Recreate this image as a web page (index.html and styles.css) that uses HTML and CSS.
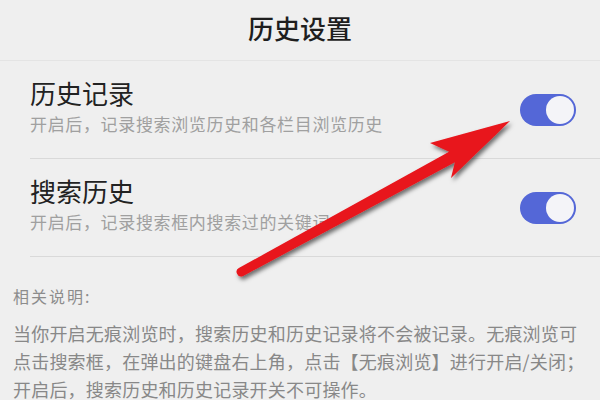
FILE: index.html
```html
<!DOCTYPE html>
<html lang="zh-CN">
<head>
<meta charset="utf-8">
<title>历史设置</title>
<link rel="stylesheet" href="styles.css">
</head>
<body>
<div class="page">
  <header class="header">历史设置</header>
  <section class="list">
    <div class="row">
      <div class="text">
        <div class="title">历史记录</div>
        <div class="desc">开启后，记录搜索浏览历史和各栏目浏览历史</div>
      </div>
      <span class="switch"><span class="knob"></span></span>
    </div>
    <div class="row">
      <div class="text">
        <div class="title">搜索历史</div>
        <div class="desc">开启后，记录搜索框内搜索过的关键词</div>
      </div>
      <span class="switch"><span class="knob"></span></span>
    </div>
  </section>
  <section class="notes">
    <div class="label">相关说明:</div>
    <p class="para">当你开启无痕浏览时，搜索历史和历史记录将不会被记录。无痕浏览可点击搜索框，在弹出的键盘右上角，点击【无痕浏览】进行开启/关闭；开启后，搜索历史和历史记录开关不可操作。</p>
  </section>
  <svg class="arrow" width="600" height="400" viewBox="0 0 600 400">
    <defs>
      <filter id="sh" x="-10%" y="-10%" width="130%" height="130%">
        <feDropShadow dx="2" dy="3" stdDeviation="2" flood-color="#000" flood-opacity="0.55"/>
      </filter>
    </defs>
    <path filter="url(#sh)" fill="#e8141b" d="M238.85 268.05 L449.13 151.73 L430 143 L510 121 L451 178 L454.87 162.27 L243.15 275.95 A4.5 4.5 0 0 1 238.85 268.05 Z"/>
  </svg>
</div>
</body>
</html>
```

FILE: styles.css
```css
html, body {
  margin: 0;
  padding: 0;
  background: #efefef;
}
body {
  font-family: "Noto Sans CJK SC", "Noto Sans", sans-serif;
  width: 600px;
  height: 400px;
  overflow: hidden;
}
.page {
  position: relative;
  width: 600px;
  height: 400px;
}
.header {
  height: 60px;
  line-height: 56px;
  text-align: center;
  font-size: 26px;
  font-weight: 500;
  color: #1e1e1e;
  border-bottom: 1px solid #e4e4e4;
}
.list {
  padding-left: 30px;
}
.row {
  display: flex;
  align-items: center;
  justify-content: space-between;
  height: 97px;
  padding-right: 24px;
  border-bottom: 1px solid #d9d9d9;
}
.text {
  display: flex;
  flex-direction: column;
  padding-bottom: 6px;
}
.title {
  font-size: 26px;
  line-height: 30px;
  color: #222;
}
.desc {
  margin-top: 5px;
  font-size: 17px;
  line-height: 22px;
  letter-spacing: 0.65px;
  color: #a0a0a0;
}
.switch {
  display: flex;
  justify-content: flex-end;
  align-items: center;
  width: 56px;
  height: 32px;
  padding: 2px;
  box-sizing: border-box;
  border-radius: 16px;
  background: #5467d7;
}
.knob {
  width: 28px;
  height: 28px;
  border-radius: 50%;
  background: #f4f4f8;
}
.notes {
  padding: 27px 8px 0 13px;
}
.label {
  font-size: 16px;
  line-height: 24px;
  letter-spacing: 2px;
  color: #8c8c8c;
}
.para {
  margin: 11px 0 0 0;
  font-size: 18px;
  line-height: 28px;
  letter-spacing: 0.2px;
  color: #888;
}
.arrow {
  position: absolute;
  left: 0;
  top: 0;
  pointer-events: none;
}
```
